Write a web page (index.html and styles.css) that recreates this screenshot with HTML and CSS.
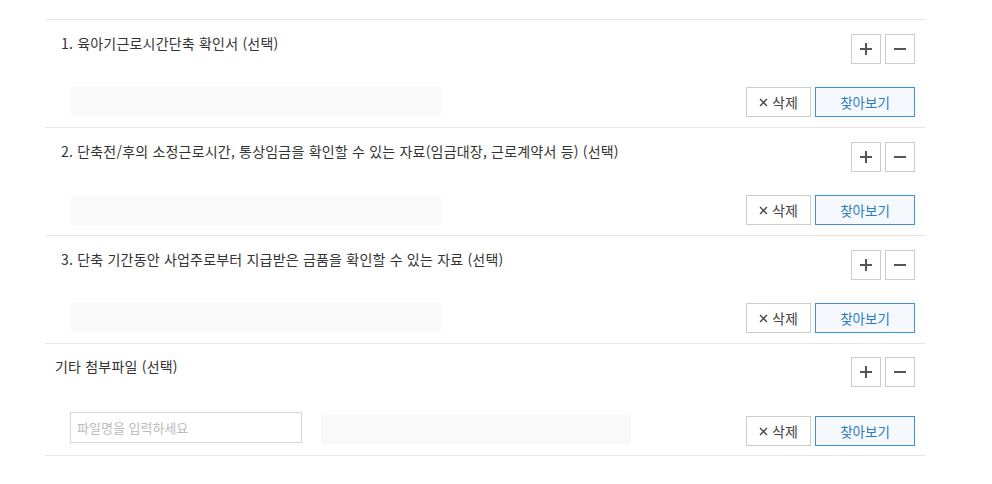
FILE: index.html
```html
<!DOCTYPE html>
<html lang="ko">
<head>
<meta charset="utf-8">
<title>첨부파일</title>
<link rel="stylesheet" href="styles.css">
</head>
<body>
<div class="file-list">
  <div class="file-item">
    <div class="title-row">
      <p class="title">1. 육아기근로시간단축 확인서 (선택)</p>
      <div class="pm">
        <button class="sq" type="button" aria-label="추가"><svg width="14" height="14" viewBox="0 0 14 14"><path d="M7 1v12M1 7h12" stroke="#555" stroke-width="2"/></svg></button>
        <button class="sq" type="button" aria-label="삭제"><svg width="14" height="14" viewBox="0 0 14 14"><path d="M1 7h12" stroke="#555" stroke-width="2"/></svg></button>
      </div>
    </div>
    <div class="file-row">
      <div class="file-box"></div>
      <div class="btns">
        <button class="btn-del" type="button"><svg width="9" height="9" viewBox="0 0 9 9"><path d="M1 1l7 7M8 1L1 8" stroke="#444" stroke-width="1.3"/></svg>삭제</button>
        <button class="btn-find" type="button">찾아보기</button>
      </div>
    </div>
  </div>
  <div class="file-item">
    <div class="title-row">
      <p class="title">2. 단축전/후의 소정근로시간, 통상임금을 확인할 수 있는 자료(임금대장, 근로계약서 등) (선택)</p>
      <div class="pm">
        <button class="sq" type="button" aria-label="추가"><svg width="14" height="14" viewBox="0 0 14 14"><path d="M7 1v12M1 7h12" stroke="#555" stroke-width="2"/></svg></button>
        <button class="sq" type="button" aria-label="삭제"><svg width="14" height="14" viewBox="0 0 14 14"><path d="M1 7h12" stroke="#555" stroke-width="2"/></svg></button>
      </div>
    </div>
    <div class="file-row">
      <div class="file-box"></div>
      <div class="btns">
        <button class="btn-del" type="button"><svg width="9" height="9" viewBox="0 0 9 9"><path d="M1 1l7 7M8 1L1 8" stroke="#444" stroke-width="1.3"/></svg>삭제</button>
        <button class="btn-find" type="button">찾아보기</button>
      </div>
    </div>
  </div>
  <div class="file-item">
    <div class="title-row">
      <p class="title">3. 단축 기간동안 사업주로부터 지급받은 금품을 확인할 수 있는 자료 (선택)</p>
      <div class="pm">
        <button class="sq" type="button" aria-label="추가"><svg width="14" height="14" viewBox="0 0 14 14"><path d="M7 1v12M1 7h12" stroke="#555" stroke-width="2"/></svg></button>
        <button class="sq" type="button" aria-label="삭제"><svg width="14" height="14" viewBox="0 0 14 14"><path d="M1 7h12" stroke="#555" stroke-width="2"/></svg></button>
      </div>
    </div>
    <div class="file-row">
      <div class="file-box"></div>
      <div class="btns">
        <button class="btn-del" type="button"><svg width="9" height="9" viewBox="0 0 9 9"><path d="M1 1l7 7M8 1L1 8" stroke="#444" stroke-width="1.3"/></svg>삭제</button>
        <button class="btn-find" type="button">찾아보기</button>
      </div>
    </div>
  </div>
  <div class="file-item file-item--etc">
    <div class="title-row">
      <p class="title title--etc">기타 첨부파일 (선택)</p>
      <div class="pm">
        <button class="sq" type="button" aria-label="추가"><svg width="14" height="14" viewBox="0 0 14 14"><path d="M7 1v12M1 7h12" stroke="#555" stroke-width="2"/></svg></button>
        <button class="sq" type="button" aria-label="삭제"><svg width="14" height="14" viewBox="0 0 14 14"><path d="M1 7h12" stroke="#555" stroke-width="2"/></svg></button>
      </div>
    </div>
    <div class="file-row file-row--etc">
      <input class="name-input" type="text" placeholder="파일명을 입력하세요">
      <div class="file-box file-box--etc"></div>
      <div class="btns btns--etc">
        <button class="btn-del" type="button"><svg width="9" height="9" viewBox="0 0 9 9"><path d="M1 1l7 7M8 1L1 8" stroke="#444" stroke-width="1.3"/></svg>삭제</button>
        <button class="btn-find" type="button">찾아보기</button>
      </div>
    </div>
  </div>
</div>
</body>
</html>
```
FILE: styles.css
```css
* { box-sizing: border-box; }
body {
  margin: 0;
  background: #fff;
  font-family: "Noto Sans CJK KR", "Noto Sans", sans-serif;
  color: #333;
}
.file-list {
  margin: 19px 0 0 45px;
  width: 880px;
  border-top: 1px solid #e4e4e4;
}
.file-item {
  border-bottom: 1px solid #e4e4e4;
  padding: 14px 10px 10px 0;
}
.file-item--etc { padding-top: 13px; padding-bottom: 9px; }
.title-row {
  display: flex;
  justify-content: space-between;
  align-items: flex-start;
  height: 30px;
}
.title {
  margin: 0;
  padding-left: 16px;
  font-size: 14px;
  line-height: 19px;
  letter-spacing: 0.2px;
  color: #333;
}
.title--etc { padding-left: 10px; }
.pm { display: flex; gap: 4px; }
.sq {
  width: 30px;
  height: 30px;
  border: 1px solid #ccc;
  background: #fff;
  padding: 0;
  display: flex;
  align-items: center;
  justify-content: center;
}
.file-row {
  display: flex;
  align-items: center;
  margin-top: 23px;
  padding-left: 26px;
}
.file-box {
  width: 370px;
  height: 30px;
  background: #f9f9f9;
}
.btns {
  margin-left: auto;
  display: flex;
  gap: 4px;
}
.btn-del {
  width: 65px;
  height: 30px;
  border: 1px solid #ccc;
  background: #fff;
  font-family: inherit;
  font-size: 14px;
  color: #444;
  display: flex;
  align-items: center;
  justify-content: center;
  gap: 4px;
  padding: 0;
}
.btn-find {
  width: 100px;
  height: 30px;
  border: 1px solid #3d90d2;
  background: #f5f9fe;
  font-family: inherit;
  font-size: 13.5px;
  color: #2b7cc1;
  padding: 0;
}
.file-row--etc {
  align-items: flex-start;
  margin-top: 25px;
  padding-left: 25px;
}
.name-input {
  width: 232px;
  height: 31px;
  border: 1px solid #d6d6d6;
  padding: 0 6px;
  font-family: inherit;
  font-size: 13px;
  color: #333;
}
.name-input::placeholder { color: #bbb; }
.file-box--etc {
  width: 310px;
  height: 29px;
  margin: 3px 0 0 19px;
}
.btns--etc { margin-top: 4px; }
```
